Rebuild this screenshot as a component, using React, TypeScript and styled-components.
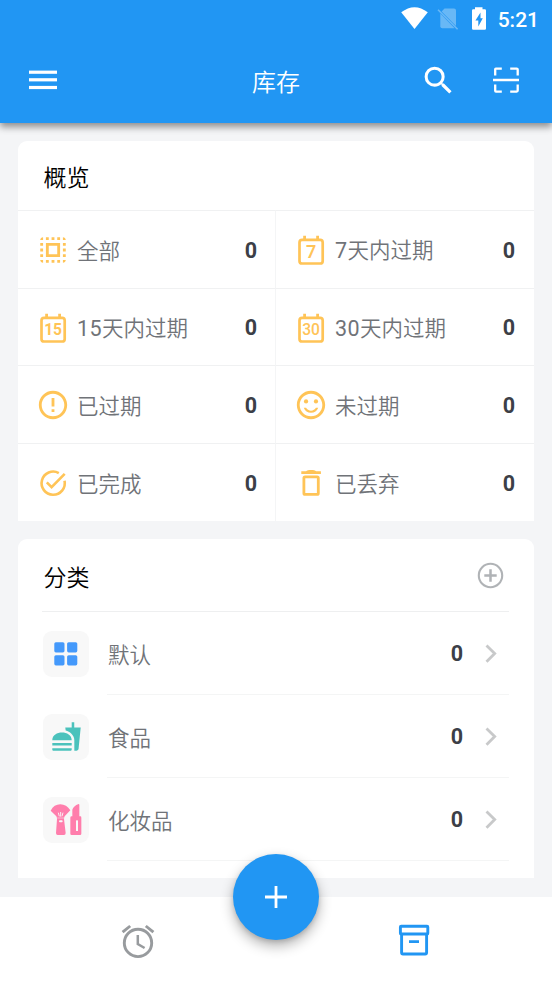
import React from "react";
import styled, { createGlobalStyle } from "styled-components";
import {
  MdSelectAll,
  MdErrorOutline,
  MdFastfood,
  MdSearch,
  MdOutlineSentimentSatisfiedAlt,
} from "react-icons/md";

const GlobalStyle = createGlobalStyle`
  * { box-sizing: border-box; }
  html, body { margin: 0; padding: 0; }
  body {
    background: #f4f5f7;
    font-family: Roboto, "Noto Sans CJK SC", sans-serif;
  }
  svg { display: block; flex: none; }
`;

const Screen = styled.div`
  width: 552px;
  height: 983px;
  display: flex;
  flex-direction: column;
  overflow: hidden;
  background: #f4f5f7;
`;

const AppHeader = styled.header`
  flex: none;
  height: 123px;
  background: #2196f3;
  color: #fff;
  box-shadow: 0 4px 7px rgba(0, 0, 0, 0.42);
  z-index: 1;
`;

const StatusBar = styled.div`
  height: 38px;
  padding: 0 13px 0 0;
  display: flex;
  justify-content: flex-end;
  align-items: center;
`;

const Clock = styled.span`
  font-size: 21px;
  line-height: 24px;
  font-weight: 500;
  margin-left: 12px;
  padding-top: 1px;
`;

const Toolbar = styled.div`
  height: 85px;
  padding: 0 33px 1px 29px;
  display: grid;
  grid-template-columns: 1fr auto 1fr;
  align-items: center;
`;

const Title = styled.h1`
  margin: 0;
  padding: 6px 0 0 4px;
  font-size: 24px;
  line-height: 36px;
  font-weight: 350;
`;

const Actions = styled.div`
  display: flex;
  justify-content: flex-end;
  align-items: center;
  gap: 36px;
`;

const Content = styled.main`
  flex: 1;
  min-height: 0;
  padding: 18px 18px 0;
  display: flex;
  flex-direction: column;
  gap: 18px;
`;

const Card = styled.section`
  flex: none;
  width: 516px;
  background: #fff;
  border-radius: 9px 9px 0 0;
`;

const CardHeader = styled.div<{ $height: number }>`
  height: ${(p) => p.$height}px;
  display: flex;
  justify-content: space-between;
  align-items: center;
`;

const CardTitle = styled.h2`
  margin: 0;
  padding-top: 5px;
  font-size: 23px;
  line-height: 34px;
  font-weight: 350;
  color: #000;
`;

const OverviewHeader = styled(CardHeader)`
  padding: 1px 25px 0 25.5px;
`;

const OverviewGrid = styled.div`
  display: grid;
  grid-template-columns: 258px 258px;
  grid-template-rows: 78px 77px 78px 78px;
`;

const OverviewCell = styled.div`
  display: flex;
  align-items: center;
  padding: 1px 19px 0 18.5px;
  border-top: 1px solid #f0f1f2;
  &:nth-child(odd) { border-right: 1px solid #f4f5f6; padding-right: 18px; }
`;

const Label = styled.span<{ $drop?: number }>`
  flex: 1;
  padding-top: ${(p) => p.$drop ?? 0}px;
  font-size: 21.5px;
  line-height: 30px;
  font-weight: 350;
  color: #707378;
`;

const OverviewLabel = styled(Label)`
  padding-left: 6.5px;
`;

const Days = styled.span`
  font-weight: 400;
  letter-spacing: 0.4px;
`;

const Count = styled.span`
  font-size: 21.5px;
  line-height: 26px;
  font-weight: 700;
  color: #3c3f47;
`;

const OverviewCount = styled(Count)`
  padding-top: 1px;
`;

const IconSlot = styled.span`
  color: #ffc457;
  width: 34px;
  height: 34px;
  margin-left: -0.5px;
  margin-right: 0.5px;
  display: flex;
  align-items: center;
  justify-content: center;
`;

const CategoryHeader = styled(CardHeader)`
  margin: 0 25px 0 24px;
  padding: 0 5px 0 1.5px;
  border-bottom: 1px solid #eeeff0;
`;

const CategoryTitle = styled(CardTitle)`
  padding-top: 7px;
`;

const CategoryRow = styled.div`
  height: 83px;
  padding: 0 25px;
  display: flex;
  align-items: center;
  gap: 18px;
`;

const Tile = styled.div<{ $color: string }>`
  width: 46px;
  height: 46px;
  border-radius: 9px;
  background: #f8f8f8;
  color: ${(p) => p.$color};
  display: flex;
  align-items: center;
  justify-content: center;
`;

const CategoryBody = styled.div`
  flex: 1;
  height: 100%;
  display: flex;
  align-items: center;
  border-bottom: 1px solid #f4f5f5;
  padding: 1px 12px 0 1px;
`;

const Chevron = styled.svg`
  margin-left: 22px;
`;

const BottomSpace = styled.div`
  height: 17px;
`;

const BottomNav = styled.nav`
  flex: none;
  position: relative;
  z-index: 1;
  height: 86px;
  padding-top: 2px;
  background: #fff;
  display: grid;
  grid-template-columns: 276px 276px;
  align-items: center;
  justify-items: center;
`;

const NavItem = styled.button`
  border: 0;
  padding: 0;
  background: none;
  width: 40px;
  height: 40px;
`;

const AddButton = styled.button`
  position: absolute;
  top: -43px;
  left: 233px;
  width: 86px;
  height: 86px;
  border: 0;
  border-radius: 50%;
  background: #2196f3;
  box-shadow: 0 6px 13px rgba(0, 0, 0, 0.3), 0 2px 4px rgba(0, 0, 0, 0.12);
  display: flex;
  align-items: center;
  justify-content: center;
`;

const CalendarDigits = styled.text`
  font-family: Roboto, sans-serif;
  fill: currentColor;
  text-anchor: middle;
`;

function Calendar({ days }: { days: string }) {
  const single = days.length === 1;
  return (
    <svg width="34" height="34" viewBox="0 0 34 34">
      <rect x="5.5" y="6.9" width="23.2" height="23.6" rx="2.6" fill="none" stroke="currentColor" strokeWidth="2.7" />
      <path d="M10.6 2.7V7M23.6 2.7V7" stroke="currentColor" strokeWidth="2.8" />
      <CalendarDigits x="17.1" y={single ? 24.6 : 24.2} fontSize={single ? 18 : 15.6} fontWeight={single ? 600 : days === "15" ? 700 : 500}>
        {days}
      </CalendarDigits>
    </svg>
  );
}

const DoneIcon = () => (
  <svg width="34" height="34" viewBox="0 0 34 34" fill="none" stroke="currentColor" strokeWidth="2.6">
    <path d="M28.55 14.8A11.6 11.6 0 1 1 22.8 7.05" />
    <path d="M10.8 16.4L15.6 21.2L28.7 7.8" />
  </svg>
);

const TrashIcon = () => (
  <svg width="34" height="34" viewBox="0 0 34 34" fill="none" stroke="currentColor">
    <rect x="9.9" y="10.8" width="14.4" height="17.6" rx="1.2" strokeWidth="2.8" />
    <path d="M7.3 5.3H12.1C13.3 3.7 20.9 3.7 22.1 5.3H26.9V8.1H7.3Z" fill="currentColor" stroke="none" />
  </svg>
);

const DefaultIcon = () => (
  <svg width="46" height="46" viewBox="0 0 46 46" fill="currentColor">
    <rect x="11.3" y="11.2" width="10.2" height="10.2" rx="1.6" />
    <rect x="24.1" y="11.2" width="10.2" height="10.2" rx="1.6" />
    <rect x="11.3" y="24.2" width="10.2" height="10.2" rx="1.6" />
    <rect x="24.1" y="24.2" width="10.2" height="10.2" rx="1.6" />
  </svg>
);

const CosmeticsIcon = () => (
  <svg width="46" height="46" viewBox="0 0 138 138" fill="currentColor">
    <path d="M23 41Q33 22 52 22T82 40L65 58Q63 61 63 66L68 108Q68 114 63 114H44Q39 114 39 108L42 66Q42 61 40 58Z" />
    <path d="M46 47L49 58M53 45V59M60 47L57 58" stroke="#f8f8f8" strokeWidth="2.8" fill="none" />
    <path d="M43 63H63" stroke="#f8f8f8" strokeWidth="1.6" />
    <rect x="48" y="70" width="11" height="6" rx="3" fill="#f8f8f8" />
    <path d="M88 58V38Q91 27 107 21Q109 21 109 24V58H112Q115 58 115 62V110Q115 114 111 114H86Q82 114 82 110V62Q82 58 86 58Z" />
    <rect x="99" y="70" width="6" height="32" rx="1" fill="#f8f8f8" />
  </svg>
);

const overview = [
  { days: "", label: "全部", count: 0, icon: <MdSelectAll size={34} /> },
  { days: "7", label: "天内过期", count: 0, icon: <Calendar days="7" /> },
  { days: "15", label: "天内过期", count: 0, icon: <Calendar days="15" /> },
  { days: "30", label: "天内过期", count: 0, icon: <Calendar days="30" /> },
  { days: "", label: "已过期", count: 0, icon: <MdErrorOutline size={34} /> },
  { days: "", label: "未过期", count: 0, icon: <MdOutlineSentimentSatisfiedAlt size={34} /> },
  { days: "", label: "已完成", count: 0, icon: <DoneIcon /> },
  { days: "", label: "已丢弃", count: 0, icon: <TrashIcon /> },
];

const categories = [
  { label: "默认", count: 0, color: "#4499fb", icon: <DefaultIcon /> },
  { label: "食品", count: 0, color: "#4bc2bc", icon: <MdFastfood size={31} /> },
  { label: "化妆品", count: 0, color: "#ff7eac", icon: <CosmeticsIcon /> },
];

export default function App() {
  return (
    <>
      <GlobalStyle />
      <Screen>
        <AppHeader>
          <StatusBar>
            <svg width="86" height="38" viewBox="0 0 86 38" fill="#fff">
              <path d="M1.2 12.3Q14.5 2 27.8 12.3L14.5 29Z" />
              <g opacity="0.32">
                <path d="M44.5 8.5H54Q56 8.5 56 10.5V26L41.6 11.4Z" />
                <path d="M40.3 13.6L54.6 28.2H42.3Q40.3 28.2 40.3 26.2Z" />
                <path d="M38 9.8L57.6 29.2" stroke="#fff" strokeWidth="1.6" />
              </g>
              <path
                fillRule="evenodd"
                d="M75 7.3H82.5V9.2H84.8Q86 9.2 86 10.4V28.5Q86 29.8 84.8 29.8H73.2Q72 29.8 72 28.5V10.4Q72 9.2 73.2 9.2H75ZM80.5 12.4L75.4 20.4H78.3V26.6L82.8 18.2H80.5Z"
              />
            </svg>
            <Clock>5:21</Clock>
          </StatusBar>
          <Toolbar>
            <svg width="28" height="20" viewBox="0 0 28 20" fill="#fff">
              <rect y="0.6" width="28" height="3.2" />
              <rect y="8.2" width="28" height="3.2" />
              <rect y="15.9" width="28" height="3.2" />
            </svg>
            <Title>库存</Title>
            <Actions>
              <MdSearch size={37} />
              <svg width="26" height="26" viewBox="0 0 26 26" fill="none" stroke="#fff" strokeWidth="2.3">
                <path d="M2.2 8.6V2.2Q2.2 1.6 2.8 1.6H8.8M17.2 1.6H23.7Q24.7 1.6 24.7 2.6V8.6M2.2 17.4V23.8Q2.2 24.6 3 24.6H8.8M17.2 24.6H23.7Q24.7 24.6 24.7 23.6V17.4M0 13H26" />
              </svg>
            </Actions>
          </Toolbar>
        </AppHeader>

        <Content>
          <Card>
            <OverviewHeader $height={69}>
              <CardTitle>概览</CardTitle>
            </OverviewHeader>
            <OverviewGrid>
              {overview.map((item) => (
                <OverviewCell key={item.days + item.label}>
                  <IconSlot>{item.icon}</IconSlot>
                  <OverviewLabel $drop={item.days ? 2 : 4}>
                    {item.days && <Days>{item.days}</Days>}
                    {item.label}
                  </OverviewLabel>
                  <OverviewCount>{item.count}</OverviewCount>
                </OverviewCell>
              ))}
            </OverviewGrid>
          </Card>

          <Card>
            <CategoryHeader $height={73}>
              <CategoryTitle>分类</CategoryTitle>
              <svg width="27" height="27" viewBox="0 0 27 27" fill="none" stroke="#b0b3b6" strokeWidth="2.1">
                <circle cx="13.5" cy="13.5" r="11.7" />
                <path d="M13.5 7.3V19.7M7.3 13.5H19.7" strokeWidth="2.5" />
              </svg>
            </CategoryHeader>
            {categories.map((item) => (
              <CategoryRow key={item.label}>
                <Tile $color={item.color}>{item.icon}</Tile>
                <CategoryBody>
                  <Label $drop={4}>{item.label}</Label>
                  <Count>{item.count}</Count>
                  <Chevron width="12" height="20" viewBox="0 0 12 20" fill="none" stroke="#c8c9ca" strokeWidth="2.8">
                    <path d="M1.5 1.4L9.7 9.6L1.5 17.8" />
                  </Chevron>
                </CategoryBody>
              </CategoryRow>
            ))}
            <BottomSpace />
          </Card>
        </Content>

        <BottomNav>
          <NavItem aria-label="提醒">
            <svg width="40" height="40" viewBox="0 0 40 40" fill="none" stroke="#989b9e" strokeWidth="2.9">
              <circle cx="20" cy="21.9" r="13.7" />
              <path d="M4.6 11.2L12.2 5M27.8 5L35.4 11.2" />
              <path d="M19.8 14.1V23L26.6 27" strokeWidth="2.5" />
            </svg>
          </NavItem>
          <NavItem aria-label="库存">
            <svg width="40" height="40" viewBox="0 0 40 40" fill="none" stroke="#2196f3" strokeWidth="2.9">
              <rect x="6.4" y="5.2" width="27.4" height="7.8" rx="0.8" />
              <path d="M7.6 13V31.6Q7.6 33 9 33H31.2Q32.6 33 32.6 31.6V13M15 20.6H25" />
            </svg>
          </NavItem>
          <AddButton aria-label="添加">
            <svg width="22" height="22" viewBox="0 0 22 22" stroke="#fff" strokeWidth="2.8">
              <path d="M11 0V22M0 11H22" />
            </svg>
          </AddButton>
        </BottomNav>
      </Screen>
    </>
  );
}
